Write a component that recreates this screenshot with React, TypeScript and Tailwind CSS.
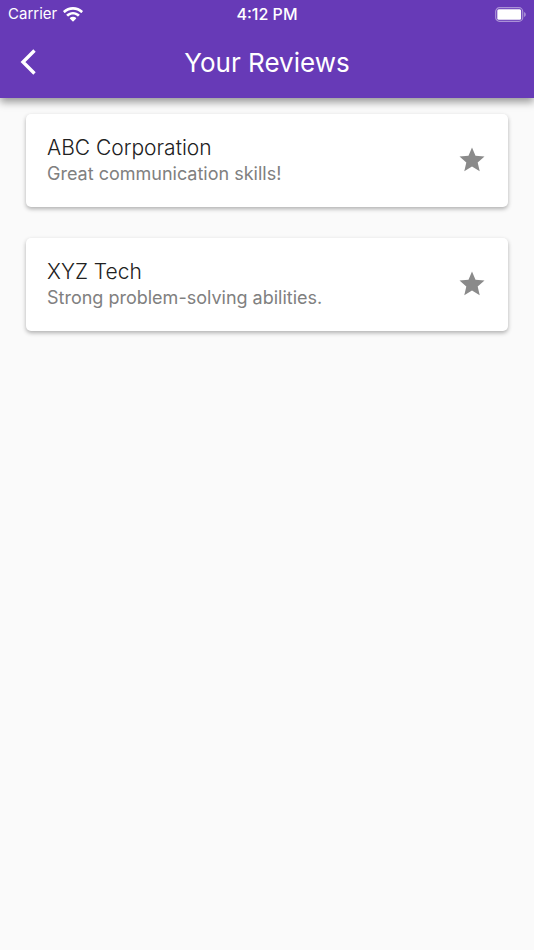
import { MdStar } from 'react-icons/md';

const reviews = [
	{ id: 1, company: 'ABC Corporation', comment: 'Great communication skills!' },
	{ id: 2, company: 'XYZ Tech', comment: 'Strong problem-solving abilities.' },
];

function WifiIcon() {
	return (
		<svg viewBox="0 0 20 15" className="h-[15px] w-5" fill="currentColor" aria-hidden="true">
			<path d="M10 0C6.200 0 2.700 1.400.3 3.700c-.3.3-.3.6 0 .9l1 1.100c.3.3.6.3.9 0C4.300 3.800 7 2.700 10 2.700s5.700 1.100 7.800 3c.3.3.6.3.9 0l1-1.100c.3-.3.3-.6 0-.9C17.300 1.400 13.800 0 10 0Z" />
			<path d="M10 4.900c-2.500 0-4.700.9-6.400 2.400-.3.3-.3.600 0 .9l1.100 1.100c.3.3.6.3.9 0C6.800 8.200 8.300 7.600 10 7.600s3.200.6 4.400 1.700c.3.3.6.3.9 0l1.100-1.100c.3-.3.3-.6 0-.9C14.700 5.800 12.500 4.900 10 4.900Z" />
			<path d="M10 9.700c-1.200 0-2.200.4-3 1.100-.3.3-.3.6 0 .9l2.500 2.500c.3.3.700.3 1 0l2.500-2.500c.3-.3.3-.6 0-.9-.8-.7-1.900-1.100-3-1.100Z" />
		</svg>
	);
}

function BatteryIcon() {
	return (
		<svg viewBox="0 0 31 15" className="h-[15px] w-[31px]" aria-hidden="true">
			<rect x="0.700" y="0.700" width="27" height="13.600" rx="3.800" fill="none" stroke="white" strokeOpacity="0.450" strokeWidth="1.200" />
			<rect x="2.300" y="2.300" width="23.800" height="10.400" rx="1.500" fill="white" />
			<path d="M29.200 5c1 .4 1.500 1.300 1.500 2.500s-.5 2.100-1.500 2.500Z" fill="white" fillOpacity="0.500" />
		</svg>
	);
}

function BackIcon() {
	return (
		<svg viewBox="0 0 16 26" className="h-[26px] w-4" fill="none" stroke="currentColor" aria-hidden="true">
			<path d="M14.500 1.500 3 13l11.500 11.500" strokeWidth="3.400" />
		</svg>
	);
}

export default function App() {
	return (
		<div className="min-h-screen bg-[#fafafa] font-['Inter',sans-serif]">
			<header className="bg-[#673ab7] text-white shadow-[0_4px_8px_rgba(0,0,0,0.4)]">
				{/* Status Bar */}
				<div className="grid h-7 grid-cols-3 items-center px-2 text-[15px]">
					<div className="flex items-center gap-1.5">
						<span>Carrier</span>
						<WifiIcon />
					</div>
					<span className="text-center text-[16px] font-medium">4:12 PM</span>
					<div className="flex justify-end">
						<BatteryIcon />
					</div>
				</div>

				{/* App Bar */}
				<div className="grid h-[70px] grid-cols-[1fr_auto_1fr] items-center px-5 pb-0.5">
					<button type="button" aria-label="Back" className="w-fit">
						<BackIcon />
					</button>
					<h1 className="text-[26px] font-normal">Your Reviews</h1>
				</div>
			</header>

			{/* Reviews */}
			<main className="flex flex-col gap-[31px] px-[26px] pt-4">
				{reviews.map((review) => (
					<article
						key={review.id}
						className="flex h-[93px] items-center justify-between rounded-[5px] bg-white px-[21px] pb-px shadow-[0_2px_4px_rgba(0,0,0,0.3)]"
					>
						<div>
							<h2 className="text-[21px] leading-7 font-[350] text-[#212121]">{review.company}</h2>
							<p className="text-[18px] leading-6 text-[#808080]">{review.comment}</p>
						</div>
						<MdStar className="size-[30px] text-[#8a8a8a]" />
					</article>
				))}
			</main>
		</div>
	);
}
